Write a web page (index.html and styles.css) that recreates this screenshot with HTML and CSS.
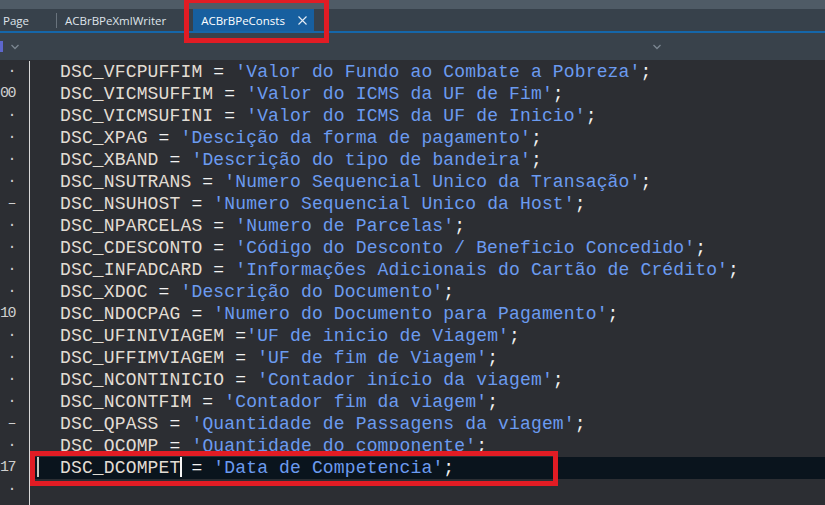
FILE: index.html
```html
<!DOCTYPE html>
<html lang="pt">
<head>
    <meta charset="UTF-8">
    <title>ACBrBPeConsts</title>
    <link rel="stylesheet" href="styles.css">
</head>
<body>
    <div class="ide">
        <div class="title-strip"></div>
        <div class="tabs">
            <div class="tab first">Page<span class="close"></span></div>
            <div class="tab-sep"></div>
            <div class="tab">ACBrBPeXmlWriter<span class="close"></span></div>
            <div class="tab active">ACBrBPeConsts
                <span class="close">
                    <svg width="9" height="9" viewBox="0 0 9 9"><path d="M0.5 0.5L8.5 8.5M8.5 0.5L0.5 8.5" stroke="#e6edf5" stroke-width="1.1" fill="none"/></svg>
                </span>
            </div>
        </div>
        <div class="toolbar">
            <span class="marker"></span>
            <svg class="chev" width="8" height="6" viewBox="0 0 8 6"><path d="M0.5 1L4 4.5L7.5 1" stroke="#7b8691" stroke-width="1.3" fill="none"/></svg>
            <div class="spacer"></div>
            <svg class="chev chev-right" width="8" height="6" viewBox="0 0 8 6"><path d="M0.5 1L4 4.5L7.5 1" stroke="#7b8691" stroke-width="1.3" fill="none"/></svg>
        </div>
        <div class="editor">
            <div class="row"><div class="ln">·</div><div class="src"><span class="id">DSC_VFCPUFFIM</span> = <span class="str">'Valor do Fundo ao Combate a Pobreza'</span>;</div></div>
            <div class="row"><div class="ln">00</div><div class="src"><span class="id">DSC_VICMSUFFIM</span> = <span class="str">'Valor do ICMS da UF de Fim'</span>;</div></div>
            <div class="row"><div class="ln">·</div><div class="src"><span class="id">DSC_VICMSUFINI</span> = <span class="str">'Valor do ICMS da UF de Inicio'</span>;</div></div>
            <div class="row"><div class="ln">·</div><div class="src"><span class="id">DSC_XPAG</span> = <span class="str">'Descição da forma de pagamento'</span>;</div></div>
            <div class="row"><div class="ln">·</div><div class="src"><span class="id">DSC_XBAND</span> = <span class="str">'Descrição do tipo de bandeira'</span>;</div></div>
            <div class="row"><div class="ln">·</div><div class="src"><span class="id">DSC_NSUTRANS</span> = <span class="str">'Numero Sequencial Unico da Transação'</span>;</div></div>
            <div class="row"><div class="ln">–</div><div class="src"><span class="id">DSC_NSUHOST</span> = <span class="str">'Numero Sequencial Unico da Host'</span>;</div></div>
            <div class="row"><div class="ln">·</div><div class="src"><span class="id">DSC_NPARCELAS</span> = <span class="str">'Numero de Parcelas'</span>;</div></div>
            <div class="row"><div class="ln">·</div><div class="src"><span class="id">DSC_CDESCONTO</span> = <span class="str">'Código do Desconto / Beneficio Concedido'</span>;</div></div>
            <div class="row"><div class="ln">·</div><div class="src"><span class="id">DSC_INFADCARD</span> = <span class="str">'Informações Adicionais do Cartão de Crédito'</span>;</div></div>
            <div class="row"><div class="ln">·</div><div class="src"><span class="id">DSC_XDOC</span> = <span class="str">'Descrição do Documento'</span>;</div></div>
            <div class="row"><div class="ln">10</div><div class="src"><span class="id">DSC_NDOCPAG</span> = <span class="str">'Numero do Documento para Pagamento'</span>;</div></div>
            <div class="row"><div class="ln">·</div><div class="src"><span class="id">DSC_UFINIVIAGEM</span> =<span class="str">'UF de inicio de Viagem'</span>;</div></div>
            <div class="row"><div class="ln">·</div><div class="src"><span class="id">DSC_UFFIMVIAGEM</span> = <span class="str">'UF de fim de Viagem'</span>;</div></div>
            <div class="row"><div class="ln">·</div><div class="src"><span class="id">DSC_NCONTINICIO</span> = <span class="str">'Contador início da viagem'</span>;</div></div>
            <div class="row"><div class="ln">·</div><div class="src"><span class="id">DSC_NCONTFIM</span> = <span class="str">'Contador fim da viagem'</span>;</div></div>
            <div class="row"><div class="ln">–</div><div class="src"><span class="id">DSC_QPASS</span> = <span class="str">'Quantidade de Passagens da viagem'</span>;</div></div>
            <div class="row"><div class="ln">·</div><div class="src"><span class="id">DSC_QCOMP</span> = <span class="str">'Quantidade do componente'</span>;</div></div>
            <div class="row"><div class="ln">17</div><div class="src current"><span class="bar"></span><span class="id">DSC_DCOMPET</span><span class="caret"></span> = <span class="str">'Data de Competencia'</span>;</div></div>
            <div class="row"><div class="ln">·</div><div class="src"></div></div>
            <div class="row"><div class="ln"></div><div class="src"></div></div>
        </div>
        <div class="mark mark-tab"></div>
        <div class="mark mark-line"></div>
    </div>
</body>
</html>
```

FILE: styles.css
```css
body {
    margin: 0;
    background-color: #2c2e33;
    overflow: hidden;
}
.ide {
    position: relative;
    width: 825px;
    height: 505px;
    overflow: hidden;
}
.title-strip {
    height: 9px;
    background-color: #4f5b66;
}
.tabs {
    display: flex;
    align-items: stretch;
    height: 22px;
    background-color: #37414b;
    border-bottom: 2px solid #1566a9;
    font-family: "Open Sans", Arial, sans-serif;
    font-size: 11.5px;
    color: #dfe4ea;
}
.tab {
    display: flex;
    align-items: center;
    gap: 13px;
    padding: 0 5px 0 8px;
    white-space: nowrap;
}
.tab.first {
    margin-left: -5px;
}
.tab .close {
    display: inline-flex;
    width: 9px;
    height: 9px;
}
.tab.active {
    padding-right: 7px;
    background-color: #175f9f;
    color: #fff;
}
.tab-sep {
    width: 1px;
    margin: 4px 0 3px;
    background-color: #69737d;
}
.toolbar {
    display: flex;
    align-items: center;
    height: 27px;
    background-color: #39424b;
}
.marker {
    width: 3px;
    height: 11px;
    margin-top: -1px;
    background-color: #5d67cc;
}
.chev {
    margin-left: 8px;
}
.spacer {
    flex: 1;
}
.chev-right {
    margin-right: 164px;
}
.editor {
    padding-top: 1px;
    font-family: "Liberation Mono", "Courier New", monospace;
}
.row {
    display: flex;
    height: 22px;
}
.ln {
    width: 30px;
    box-sizing: border-box;
    padding-right: 14px;
    border-right: 1px solid #d9d9d9;
    text-align: right;
    font-size: 15px;
    letter-spacing: -1.5px;
    line-height: 22px;
    color: #cfcfcf;
    white-space: nowrap;
}
.src {
    flex: 1;
    padding-left: 30px;
    font-size: 18px;
    letter-spacing: 0.15px;
    line-height: 22px;
    color: #f2f2f2;
    white-space: pre;
}
.src.current {
    padding-left: 7px;
    background-color: #0a141d;
}
.bar {
    display: inline-block;
    width: 2px;
    height: 20px;
    margin-right: 21px;
    vertical-align: -4px;
    background-color: #c9c8c0;
}
.caret {
    display: inline-block;
    width: 2px;
    height: 20px;
    margin-right: -2px;
    vertical-align: -4px;
    background-color: #f4f4f4;
}
.id {
    color: #e2ddd4;
}
.str {
    color: #6b9bf0;
}
.mark {
    position: absolute;
    border: 5px solid #e21c24;
    box-sizing: border-box;
}
.mark-tab {
    left: 184px;
    top: -2px;
    width: 145px;
    height: 45px;
}
.mark-line {
    left: 30px;
    top: 451px;
    width: 528px;
    height: 35px;
}
```
